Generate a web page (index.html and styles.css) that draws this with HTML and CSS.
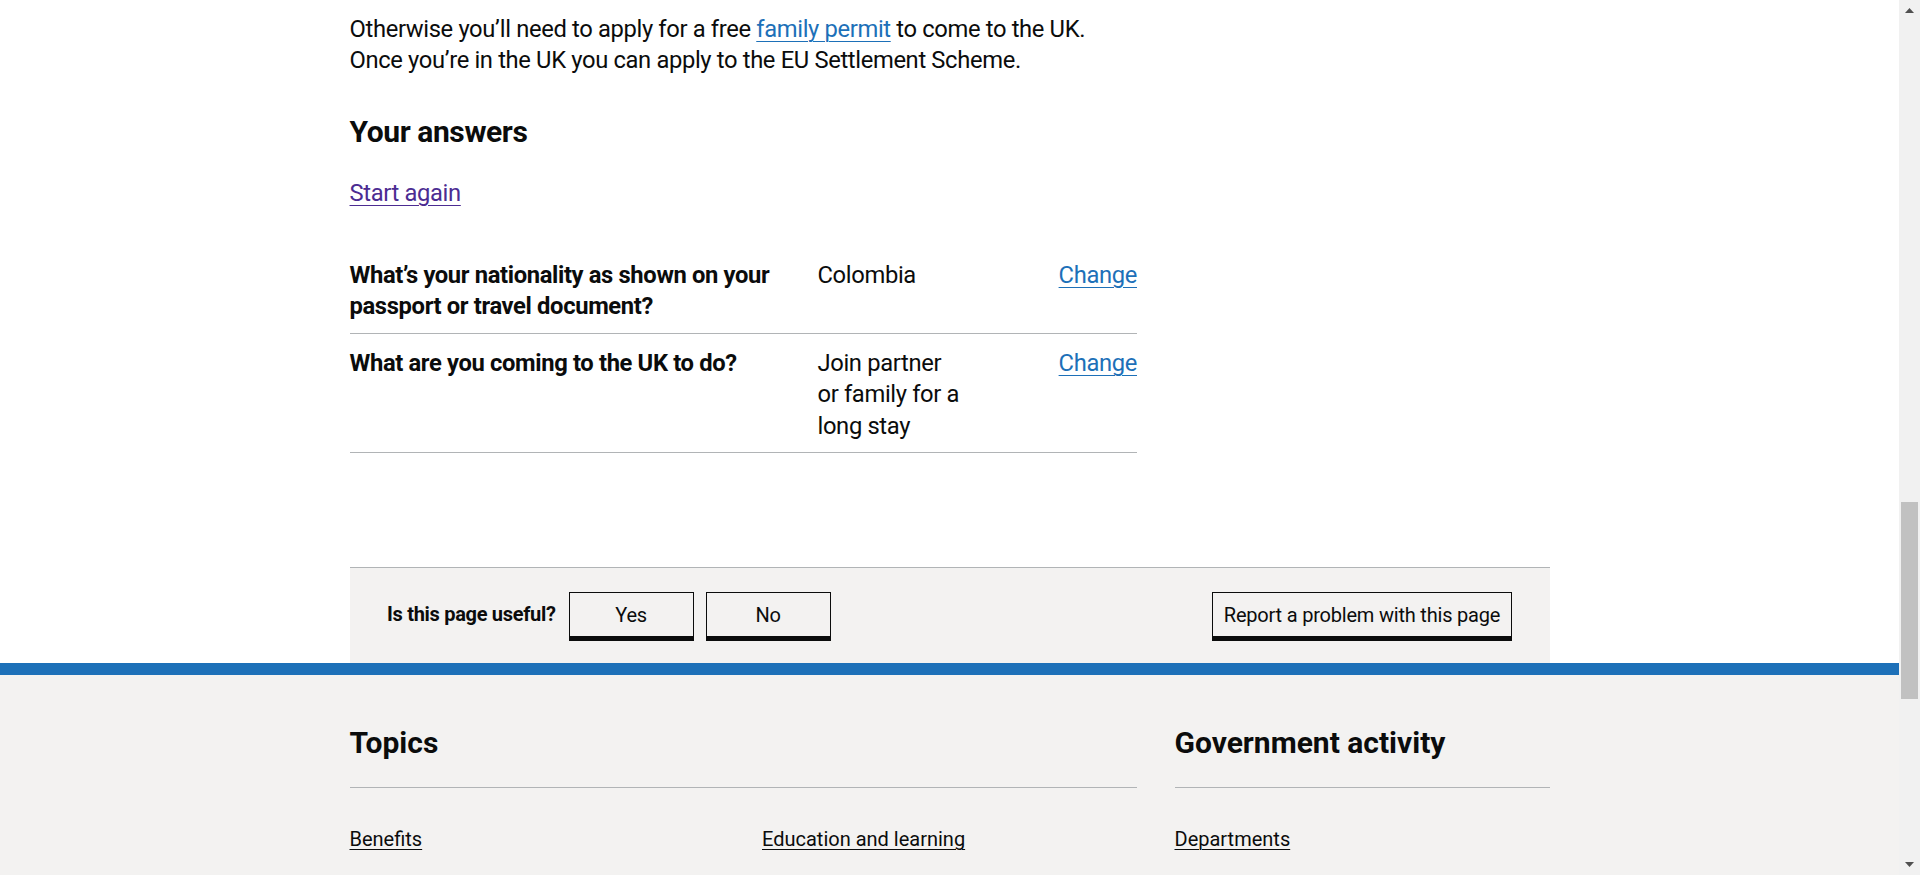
FILE: index.html
```html
<!DOCTYPE html>
<html lang="en">
<head>
<meta charset="utf-8">
<title>Check if you need a UK visa</title>
<link rel="stylesheet" href="styles.css">
</head>
<body>
<div class="viewport">
  <div class="page">
    <main class="container main">
      <p class="body-text">Otherwise you’ll need to apply for a free <a class="link" href="#">family permit</a> to come to the UK.<br>Once you’re in the UK you can apply to the EU Settlement Scheme.</p>
      <h2 class="heading-m">Your answers</h2>
      <p class="body-text start"><a class="link visited" href="#">Start again</a></p>
      <dl class="summary">
        <div class="row">
          <dt class="key">What’s your nationality as shown on your passport or travel document?</dt>
          <dd class="value">Colombia</dd>
          <dd class="action"><a class="link" href="#">Change</a></dd>
        </div>
        <div class="row">
          <dt class="key">What are you coming to the UK to do?</dt>
          <dd class="value">Join partner or family for a long stay</dd>
          <dd class="action"><a class="link" href="#">Change</a></dd>
        </div>
      </dl>
      <div class="feedback">
        <div class="feedback-question">
          <h2 class="feedback-title">Is this page useful?</h2>
          <button class="btn btn-small" type="button">Yes</button>
          <button class="btn btn-small" type="button">No</button>
        </div>
        <button class="btn btn-report" type="button">Report a problem with this page</button>
      </div>
    </main>
    <footer class="footer">
      <div class="container footer-grid">
        <section class="footer-section">
          <h2 class="footer-heading">Topics</h2>
          <ul class="footer-list two-col">
            <li><a class="footer-link" href="#">Benefits</a></li>
            <li><a class="footer-link" href="#">Education and learning</a></li>
          </ul>
        </section>
        <section class="footer-section">
          <h2 class="footer-heading">Government activity</h2>
          <ul class="footer-list">
            <li><a class="footer-link" href="#">Departments</a></li>
          </ul>
        </section>
      </div>
    </footer>
  </div>
  <div class="scrollbar" aria-hidden="true">
    <div class="sb-btn"><svg width="9" height="5" viewBox="0 0 9 5"><polygon points="4.5,0 9,5 0,5" fill="#505050"/></svg></div>
    <div class="sb-track"><div class="sb-thumb"></div></div>
    <div class="sb-btn"><svg width="9" height="5" viewBox="0 0 9 5"><polygon points="0,0 9,0 4.5,5" fill="#505050"/></svg></div>
  </div>
</div>
</body>
</html>
```
FILE: styles.css
```css
html, body {
  margin: 0;
  padding: 0;
}

body {
  font-family: Roboto, "Liberation Sans", Arial, sans-serif;
  color: #0b0c0c;
  background: #ffffff;
}

.viewport {
  display: flex;
  height: 875px;
  overflow: hidden;
}

.page {
  flex: 1;
  min-width: 0;
  overflow: hidden;
  background: #ffffff;
}

.container {
  width: 1200px;
  margin: 0 auto;
}

.main {
  padding-top: 14px;
}

.body-text {
  font-size: 23.75px;
  line-height: 31.25px;
  letter-spacing: -0.35px;
  margin: 0 0 36.5px;
}

.link {
  color: #1d70b8;
  text-decoration: underline;
  text-decoration-thickness: 1px;
  text-underline-offset: 0.16em;
}

.link.visited {
  color: #4c2c92;
}

.heading-m {
  font-size: 30px;
  line-height: 37.5px;
  font-weight: 700;
  letter-spacing: -0.4px;
  margin: 0 0 27px;
}

.start {
  margin-bottom: 36.25px;
}

.summary {
  width: 787.5px;
  margin: 0 0 114px;
}

.row {
  display: grid;
  grid-template-columns: 468px 147px 1fr;
  border-bottom: 1px solid #b1b4b6;
}

.row > dt,
.row > dd {
  margin: 0;
  padding: 14.5px 0 10.5px;
  font-size: 23.75px;
  line-height: 31.25px;
  letter-spacing: -0.35px;
}

.key {
  font-weight: 700;
  padding-right: 25px !important;
}

.action {
  text-align: right;
}

.feedback {
  display: flex;
  justify-content: space-between;
  align-items: flex-start;
  background: #f3f2f1;
  border-top: 1px solid #b1b4b6;
  padding: 24px 37.5px 26px;
}

.feedback-question {
  display: flex;
  align-items: center;
  gap: 12px;
}

.feedback-title {
  font-size: 20px;
  line-height: 25px;
  font-weight: 700;
  letter-spacing: -0.3px;
  margin: 0 1px 0 0;
}

.btn {
  box-sizing: border-box;
  height: 45px;
  border: 1px solid #0b0c0c;
  box-shadow: 0 4px 0 #0b0c0c;
  background: #f3f2f1;
  color: #0b0c0c;
  font-family: Roboto, "Liberation Sans", Arial, sans-serif;
  font-size: 20px;
  line-height: 25px;
  letter-spacing: -0.2px;
  padding: 2px 0 0;
  white-space: nowrap;
  border-radius: 0;
}

.btn-small {
  width: 125px;
}

.btn-report {
  width: 300px;
}

.footer {
  background: #f3f2f1;
  border-top: 12px solid #1d70b8;
  padding-top: 49px;
  padding-bottom: 60px;
}

.footer-grid {
  display: grid;
  grid-template-columns: 787.5px 375px;
  column-gap: 37.5px;
}

.footer-heading {
  font-size: 30px;
  line-height: 37.5px;
  font-weight: 700;
  margin: 0 0 39px;
  padding-bottom: 25.5px;
  border-bottom: 1px solid #b1b4b6;
}

.footer-list {
  list-style: none;
  margin: 0;
  padding: 0;
  display: grid;
  row-gap: 18.75px;
}

.footer-list.two-col {
  grid-template-columns: 1fr 1fr;
  column-gap: 37.5px;
}

.footer-list li {
  font-size: 20px;
  line-height: 25px;
}

.footer-link {
  color: #0b0c0c;
  text-decoration: underline;
  text-decoration-thickness: 1px;
  text-underline-offset: 0.16em;
}

.scrollbar {
  width: 21px;
  flex: none;
  background: #f1f1f1;
  display: flex;
  flex-direction: column;
}

.sb-btn {
  height: 21px;
  flex: none;
  display: flex;
  align-items: center;
  justify-content: center;
}

.sb-btn svg {
  display: block;
}

.sb-track {
  flex: 1;
  display: flex;
  flex-direction: column;
}

.sb-thumb {
  margin: 481px 2px 0;
  height: 197px;
  background: #c1c1c1;
}
```
